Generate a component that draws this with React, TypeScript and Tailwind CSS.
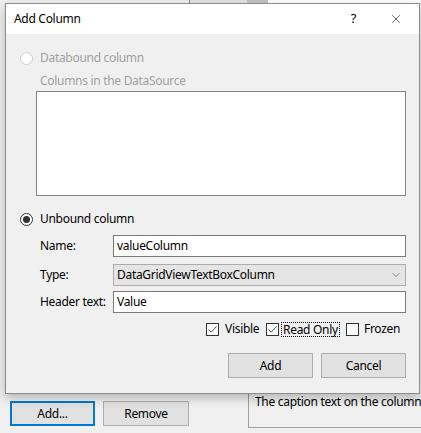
import { ChevronDown, X } from "lucide-react";

const font = { fontFamily: '"Noto Sans", "Segoe UI", sans-serif', letterSpacing: "-0.3px" };

function Radio({ checked, disabled }: { checked?: boolean; disabled?: boolean }) {
  return (
    <span
      className={`flex h-[13px] w-[13px] items-center justify-center rounded-full border bg-white ${
        disabled ? "border-[#cccccc]" : "border-[#333333]"
      }`}
    >
      {checked && <span className="h-[7px] w-[7px] rounded-full bg-[#333333]" />}
    </span>
  );
}

function Check({ checked }: { checked?: boolean }) {
  return (
    <span className="flex h-[13px] w-[13px] items-center justify-center border border-[#333333] bg-white">
      {checked && (
        <svg width="11" height="11" viewBox="0 0 11 11">
          <path d="M1.5 5.5 L4.2 8.2 L9.5 2.5" fill="none" stroke="#505050" strokeWidth="1" />
        </svg>
      )}
    </span>
  );
}

function Field({ label, children }: { label: string; children: React.ReactNode }) {
  return (
    <div className="flex items-center">
      <span className="box-content w-[73px] pl-[34px] text-[12px] text-black">{label}</span>
      {children}
    </div>
  );
}

export default function App() {
  return (
    <div className="relative h-[433px] w-[421px] overflow-hidden bg-[#f0f0f0]" style={font}>
      {/* window behind the dialog */}
      <div className="flex h-[3px] w-full">
        <div className="w-[189px] bg-[#f0f0f0]" />
        <div className="w-px bg-[#8a8a8a]" />
        <div className="w-[57px] bg-[#e4e4e4]" />
        <div className="w-[21px] bg-[#c4c4c4]" />
        <div className="flex-1 bg-[#ffffff]" />
      </div>
      <div className="mt-[390px] flex h-[40px] items-start">
        <div className="ml-[10px] mt-[8px] flex h-[25px] w-[85px] items-center justify-center border-2 border-[#0078d7] bg-[#e1e1e1] text-[12px] text-black">
          Add...
        </div>
        <div className="ml-[8px] mt-[8px] flex h-[25px] w-[86px] items-center justify-center border border-[#adadad] bg-[#e1e1e1] text-[12px] text-black">
          Remove
        </div>
        <div className="ml-[59px] h-[35px] flex-1 overflow-hidden whitespace-nowrap border-b border-l border-[#a0a0a0] pl-[6px] pt-[1px] text-[12px] leading-[16px] text-black">
          The caption text on the column
        </div>
      </div>

      {/* Add Column dialog */}
      <div className="absolute left-[5px] top-[3px] flex h-[391px] w-[415px] flex-col border border-[#8c8c8c] bg-[#f0f0f0] shadow-[0_4px_10px_rgba(0,0,0,0.25)]">
        <div className="flex h-[30px] shrink-0 items-center bg-white">
          <span className="ml-[8px] text-[12px] text-black">Add Column</span>
          <span className="ml-auto mr-[33px] text-[13px] text-black">?</span>
          <X size={14} strokeWidth={1} className="mr-[16px] text-black" />
        </div>

        <div className="flex flex-col pl-[14px] pt-[16px]">
          <div className="flex h-[16px] items-center gap-[7px]">
            <Radio disabled />
            <span className="text-[12px] text-[#a0a0a0]">Databound column</span>
          </div>
          <div className="ml-[20px] mt-[7px] h-[16px] text-[12px] leading-[16px] text-[#a0a0a0]">
            Columns in the DataSource
          </div>
          <div className="ml-[16px] mt-[2px] h-[105px] w-[370px] border border-[#838383] bg-white" />

          <div className="mt-[15px] flex h-[16px] items-center gap-[7px]">
            <Radio checked />
            <span className="text-[12px] text-black">Unbound column</span>
          </div>
        </div>

        <div className="mt-[8px] flex flex-col">
          <Field label="Name:">
            <div className="flex h-[22px] w-[293px] items-center border border-[#7a7a7a] bg-white pl-[3px] text-[12px] text-black">
              valueColumn
            </div>
          </Field>
          <div className="mt-[7px]">
            <Field label="Type:">
              <div className="flex h-[22px] w-[293px] items-center border border-[#acacac] bg-[#e5e5e5] pl-[3px] text-[12px] text-black">
                DataGridViewTextBoxColumn
                <ChevronDown size={12} strokeWidth={1.3} className="ml-auto mr-[3px] text-[#404040]" />
              </div>
            </Field>
          </div>
          <div className="mt-[5px]">
            <Field label="Header text:">
              <div className="flex h-[22px] w-[293px] items-center border border-[#7a7a7a] bg-white pl-[3px] text-[12px] text-black">
                Value
              </div>
            </Field>
          </div>

          <div className="ml-[200px] mt-[8px] flex h-[16px] items-center text-[12px] text-black">
            <div className="flex w-[60px] items-center gap-[6px]">
              <Check checked />
              <span>Visible</span>
            </div>
            <div className="flex w-[80px] items-center gap-[2px]">
              <Check checked />
              <span className="border border-dotted border-black px-px leading-[13px]">Read Only</span>
            </div>
            <div className="flex items-center gap-[5px]">
              <Check />
              <span>Frozen</span>
            </div>
          </div>

          <div className="mr-[13px] mt-[16px] flex justify-end gap-[8px]">
            <div className="flex h-[25px] w-[85px] items-center justify-center border border-[#adadad] bg-[#e1e1e1] text-[12px] text-black">
              Add
            </div>
            <div className="flex h-[25px] w-[85px] items-center justify-center border border-[#adadad] bg-[#e1e1e1] text-[12px] text-black">
              Cancel
            </div>
          </div>
        </div>
      </div>
    </div>
  );
}
